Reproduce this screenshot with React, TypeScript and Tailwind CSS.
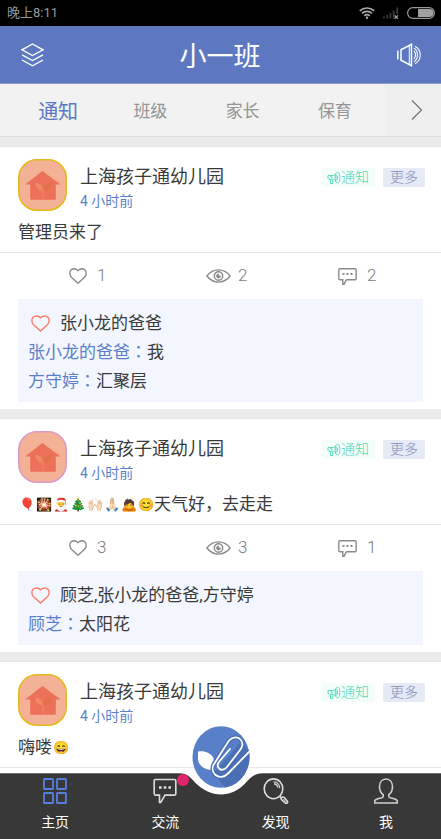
import { useState } from "react";
import type { ReactNode } from "react";

type Comment = { author: string; text: string };

type Activity = {
  likes: number;
  views: number;
  replies: number;
  likedBy: string;
  comments: Comment[];
};

type Post = {
  id: number;
  ring: string;
  emoji?: string[];
  text: string;
  trailing?: string[];
  activity?: Activity;
};

const TABS = ["通知", "班级", "家长", "保育"];

const POSTS: Post[] = [
  {
    id: 1,
    ring: "#e6b91e",
    text: "管理员来了",
    activity: {
      likes: 1,
      views: 2,
      replies: 2,
      likedBy: "张小龙的爸爸",
      comments: [
        { author: "张小龙的爸爸", text: "我" },
        { author: "方守婷", text: "汇聚层" },
      ],
    },
  },
  {
    id: 2,
    ring: "#d99bc9",
    emoji: ["🎈", "🎇", "🎅", "🎄", "🙌🏻", "🙏🏻", "🙇", "😊"],
    text: "天气好，去走走",
    activity: {
      likes: 3,
      views: 3,
      replies: 1,
      likedBy: "顾芝,张小龙的爸爸,方守婷",
      comments: [{ author: "顾芝", text: "太阳花" }],
    },
  },
  {
    id: 3,
    ring: "#e6b91e",
    text: "嗨喽",
    trailing: ["😄"],
  },
];

export default function App() {
  const [tab, setTab] = useState(0);

  return (
    <div className="flex h-screen flex-col overflow-hidden bg-[#ebebeb] font-['Roboto','Noto_Sans_CJK_SC',sans-serif] text-[#3a3a3a]">
      <StatusBar />

      <header className="flex h-[58px] shrink-0 items-center justify-between border-b border-[#8d9bc4] bg-[#5d78c1] pr-[19px] pl-5 text-white">
        <button type="button" aria-label="班级列表">
          <LayersIcon />
        </button>
        <h1 className="pt-1 text-[27px] leading-9">小一班</h1>
        <button type="button" aria-label="广播">
          <SpeakerIcon />
        </button>
      </header>

      <nav className="flex h-[53px] shrink-0 border-b border-[#dedede] bg-[#f2f2f2]">
        <div className="grid flex-1 grid-cols-4 pt-1 pr-1 pl-3">
          {TABS.map((t, i) => (
            <button
              key={t}
              type="button"
              onClick={() => setTab(i)}
              className={i === tab ? "text-[20px] text-[#5b78c5]" : "text-[17px] text-[#959595]"}
            >
              {t}
            </button>
          ))}
        </div>
        <button type="button" aria-label="更多栏目" className="flex w-14 items-center bg-[#efefef] pl-[26px]">
          <svg className="h-5 w-3" viewBox="0 0 12 20" fill="none" stroke="#777" strokeWidth="1.3">
            <path d="M1 .5 10.5 10 1 19.5" />
          </svg>
        </button>
      </nav>

      <main className="flex min-h-0 flex-1 flex-col gap-[9px] overflow-y-auto pt-[9px] [scrollbar-width:none]">
        {POSTS.map((p) => (
          <PostCard key={p.id} post={p} />
        ))}
      </main>

      <BottomNav />
    </div>
  );
}

// ─── Bars ────────────────────────────────────────────────────────────────────

function StatusBar() {
  return (
    <div className="flex h-[26px] shrink-0 items-center justify-between bg-black pr-[6px] pl-[7px] text-[#999]">
      <span className="text-[13px] leading-5">晚上8:11</span>
      <div className="flex items-center gap-2">
        <svg className="h-3 w-4" viewBox="0 0 16 12" fill="none" stroke="#aaa" strokeWidth="1.6">
          <path d="M.8 3.900a10.500 10.500 0 0 1 14.400 0M3 6.400a7.300 7.300 0 0 1 10 0M5.300 8.800a4 4 0 0 1 5.400 0" />
          <circle cx="8" cy="10.800" r="1.200" fill="#aaa" stroke="none" />
        </svg>
        <svg className="h-3 w-4" viewBox="0 0 16 12">
          <path
            d="M1 11.500V9.500M4.200 11.500V8M7.400 11.500V6M10.600 11.500V3.500M14.200 7V.5"
            stroke="#3a3a3a"
            strokeWidth="1.800"
          />
          <path d="M11.600 8.400 15 11.700M15 8.400l-3.400 3.300" stroke="#aaa" strokeWidth="1.200" />
        </svg>
        <svg className="h-3 w-7" viewBox="0 0 28 12">
          <rect x=".6" y=".6" width="26.800" height="10.800" rx="5.400" fill="none" stroke="#999" strokeWidth="1.200" />
          <path d="M11 2h11.500a4 4 0 0 1 0 8H11z" fill="#a0a0a0" />
        </svg>
      </div>
    </div>
  );
}

function BottomNav() {
  return (
    <footer className="relative grid h-[66px] shrink-0 grid-cols-4 border-t border-[#68706b] bg-[#383838] text-white">
      {/* White cradle under the round button */}
      <svg
        className="absolute -top-px left-1/2 h-[22px] w-[90px] -translate-x-1/2"
        viewBox="0 0 90 22"
        fill="#fff"
      >
        <path d="M3 0C12 .5 15 5 19 9.500 27 17.500 36 21.500 45 21.500S63 17.500 70 9.500C74 5 78 .5 87 0z" />
      </svg>
      <NavItem label="主页">
        <svg className="h-[26px] w-6" viewBox="0 0 24 26" fill="none" stroke="#5580e0" strokeWidth="1.800">
          <rect x="1" y="1" width="9" height="10" rx=".6" />
          <rect x="14" y="1" width="9" height="10" rx=".6" />
          <rect x="1" y="15" width="9" height="10" rx=".6" />
          <rect x="14" y="15" width="9" height="10" rx=".6" />
        </svg>
      </NavItem>
      <NavItem label="交流" badge>
        <svg className="h-[26px] w-6" viewBox="0 0 24 26" fill="none" stroke="#dcdcdc" strokeWidth="1.600">
          <path d="M2.500 1.500h19a1.300 1.300 0 0 1 1.300 1.300v13a1.300 1.300 0 0 1-1.300 1.300H12l-4.300 7.400H6.500v-7.400h-4a1.300 1.300 0 0 1-1.300-1.300v-13a1.300 1.300 0 0 1 1.300-1.300z" />
          <path d="M6 9.500h2.600M10.700 9.500h2.600M15.400 9.500H18" strokeWidth="2.600" />
        </svg>
      </NavItem>
      <NavItem label="发现">
        <svg className="h-[26px] w-[26px]" viewBox="0 0 26 26" fill="none" stroke="#dcdcdc" strokeWidth="1.600">
          <ellipse cx="10.500" cy="10.800" rx="9.300" ry="9.900" />
          <path d="M10.500 3.800c4 .3 6 2.600 6.300 6.500M11 5.600c2.200.5 3.600 1.800 4 4" strokeWidth="1.100" />
          <path d="m16.800 18.200 1.600 2" />
          <path d="M18.300 20c.9-1.300 2.300-1.200 3.200-.3l3 3.700c.6 1.300-.8 2.500-2.200 1.800l-3.700-3.400c-.5-.6-.6-1.200-.3-1.800z" />
          <path d="m20.300 21 2.600 2.700" strokeWidth="1" />
        </svg>
      </NavItem>
      <NavItem label="我">
        <svg className="h-[26px] w-6" viewBox="0 0 24 26" fill="none" stroke="#cfcfcf" strokeWidth="1.600">
          <path d="M12 1c4 0 6.500 3.400 6.500 7.800 0 3.500-1.600 6.400-3.700 7.900v1.500c0 .8.500 1.200 1.300 1.500 3 .6 5.200 1.200 6.400 2.200.8.700 1 1.700.8 3.100H.7c-.2-1.400 0-2.400.8-3.100 1.200-1 3.400-1.600 6.400-2.200.8-.3 1.300-.7 1.300-1.500v-1.500c-2.100-1.500-3.700-4.400-3.700-7.900C5.500 4.400 8 1 12 1z" />
        </svg>
      </NavItem>
      <button
        type="button"
        aria-label="发布"
        className="absolute -top-12 left-1/2 h-[62px] w-[58px] -translate-x-1/2"
      >
        <ClipIcon />
      </button>
    </footer>
  );
}

function NavItem({ label, badge, children }: { label: string; badge?: boolean; children: ReactNode }) {
  return (
    <button type="button" className="flex flex-col items-center gap-[6px] pt-1">
      <span className="relative">
        {children}
        {badge && <span className="absolute -top-1 -right-3 h-3 w-3 rounded-full bg-[#e0246e]" />}
      </span>
      <span className="text-[14px] leading-6">{label}</span>
    </button>
  );
}

// ─── Posts ───────────────────────────────────────────────────────────────────

function PostCard({ post }: { post: Post }) {
  return (
    <article className="shrink-0 border-t border-[#e6e6e6] bg-white pb-[7px]">
      <div className="flex pt-3 pr-4 pl-[18px]">
        <Avatar ring={post.ring} />
        <div className="ml-[13px] flex-1">
          <h2 className="pt-1 text-[18px] leading-7">上海孩子通幼儿园</h2>
          <p className="text-[14px] leading-5 text-[#5b7fcb]">4 小时前</p>
        </div>
        <div className="flex gap-2 pt-[9px] text-[14px] leading-[19px] font-light">
          <span className="flex h-[19px] items-center rounded-xs bg-[#f3fdfa] pr-[6px] pl-[5px] text-[#4fd8b8]">
            <HornIcon />
            通知
          </span>
          <button type="button" className="h-[19px] rounded-xs bg-[#e6eaf6] px-[7px] text-[#7f8dba]">
            更多
          </button>
        </div>
      </div>

      <p className="flex h-[42px] items-center border-b border-[#e8e8e8] px-[18px] pt-[2px] text-[17px]">
        {post.emoji?.map((e) => (
          <Emoji key={e} char={e} />
        ))}
        {post.text}
        {post.trailing?.map((e) => (
          <Emoji key={e} char={e} />
        ))}
      </p>

      {post.activity && <PostActivity activity={post.activity} />}
    </article>
  );
}

function PostActivity({ activity }: { activity: Activity }) {
  return (
    <>
      <div className="grid h-[46px] grid-cols-[137fr_132fr_103fr] items-center pl-[69px] text-[17px] font-light text-[#7c7c7c]">
        <button type="button" className="flex items-center gap-[10px]">
          <HeartIcon className="h-4 w-[18px] text-[#8a8a8a]" />
          {activity.likes}
        </button>
        <span className="flex items-center gap-[7px]">
          <EyeIcon />
          {activity.views}
        </span>
        <button type="button" className="flex items-center gap-[10px]">
          <BubbleIcon />
          {activity.replies}
        </button>
      </div>

      <div className="mx-[18px] bg-[#f3f6fe] px-[10px] pt-[10px] pb-[6px] text-[17px] leading-[29px]">
        <p className="flex items-center gap-[10px] pl-[3px]">
          <HeartIcon className="h-[17px] w-[19px] text-[#fa7f6c]" />
          {activity.likedBy}
        </p>
        {activity.comments.map((c) => (
          <p key={c.author}>
            <span className="text-[#5b7fcb]">
              {c.author}
              <span className="font-['Noto_Sans_CJK_TC',sans-serif] leading-none">：</span>
            </span>
            {c.text}
          </p>
        ))}
      </div>
    </>
  );
}

function Emoji({ char }: { char: string }) {
  return <span className="w-[17px] shrink-0 text-center text-[13px]">{char}</span>;
}

function Avatar({ ring }: { ring: string }) {
  return (
    <svg className="h-[52px] w-[49px] shrink-0" viewBox="0 0 49 52" role="img" aria-label="头像">
      <rect x=".8" y=".8" width="47.400" height="50.400" rx="18" fill="#f3b196" stroke={ring} strokeWidth="1.600" />
      <path d="M24.500 12 42.500 25.500h-4.700v14c0 .8-.6 1.300-1.300 1.300h-23c-.8 0-1.300-.5-1.300-1.300v-14H7z" fill="#ed705a" />
      <path d="M25 31.500c0-5.500 3.300-7.500 9-8.300-.2 5.500-3.300 8.300-9 8.300z" fill="#e0714a" />
      <path d="M24.800 31.500c-.4-5.300-3-7.300-7.800-8.200.4 5 2.800 8 7.800 8.200z" fill="#f08a63" />
      <path d="M25 30.500v9" stroke="#f08a63" strokeWidth="1.200" />
    </svg>
  );
}

// ─── Icons ───────────────────────────────────────────────────────────────────

function LayersIcon() {
  return (
    <svg className="h-6 w-6" viewBox="0 0 24 24" fill="none" stroke="#fff" strokeWidth="1.400">
      <path d="M12.500 1 23 6.800 12.500 12.500 2 6.800z" />
      <path d="M2 11.800 12.500 17.500 23 11.800M2 17 12.500 22.800 23 17" />
    </svg>
  );
}

function SpeakerIcon() {
  return (
    <svg className="h-6 w-[26px]" viewBox="0 0 26 24" fill="none" stroke="#fff" strokeWidth="1.500">
      <path d="M1.800 7.500v9M5 6.800v10.400l10.500 5.500V1.300z" />
      <path d="M13.300 2.500v19" strokeWidth="1" />
      <path d="M18 8c2 2 2 6 0 8M18 5.300c4.600 2.700 4.600 10.700 0 13.400M19 3.300c7 4 7 13.400 0 17.400" strokeWidth="1.100" />
    </svg>
  );
}

function HornIcon() {
  return (
    <svg className="h-[14px] w-[14px]" viewBox="0 0 14 14" fill="none" stroke="#5fdcc0" strokeWidth="1">
      <path d="M1 4.500h5.500L9 3v7.200L6.500 8.300H2.200C1 8.300.8 6.500 1 4.500zM3.500 8.300v4.200h2.300V8.300M4 4.500v1.800h2" />
      <ellipse cx="10.500" cy="6.600" rx="2.300" ry="5.200" />
      <path d="M10.500 4.500v4.200" />
    </svg>
  );
}

function HeartIcon({ className }: { className: string }) {
  return (
    <svg className={className} viewBox="0 0 18 16" fill="none" stroke="currentColor" strokeWidth="1.400">
      <path d="M9 2.600C7.800 1.300 6.500.8 5 .8 2.500.8.800 2.700.8 5.200c0 1.700.7 3 1.900 4.200L9 15.200l6.300-5.800c1.200-1.200 1.900-2.500 1.900-4.200C17.200 2.700 15.500.8 13 .8c-1.500 0-2.800.5-4 1.800z" />
    </svg>
  );
}

function EyeIcon() {
  return (
    <svg className="h-[14px] w-[25px]" viewBox="0 0 25 14" fill="none" stroke="#8a8a8a" strokeWidth="1.400">
      <path d="M.9 7C4 3 8 .9 12.500.9S21 3 24.100 7C21 11 17 13.100 12.500 13.100S4 11 .9 7z" />
      <circle cx="12.500" cy="7" r="4.200" />
      <path d="M12.500 5A2 2 0 1 0 14.500 7h-2z" fill="#8a8a8a" strokeWidth=".8" />
    </svg>
  );
}

function BubbleIcon() {
  return (
    <svg className="h-[17px] w-[19px]" viewBox="0 0 19 17" fill="none" stroke="#8a8a8a" strokeWidth="1.400">
      <path d="M2 .8h15c.7 0 1.200.5 1.200 1.200v8.500c0 .7-.5 1.200-1.200 1.200H8.500L6 16.200H4.800v-4.500H2c-.7 0-1.200-.5-1.200-1.200V2C.8 1.300 1.300.8 2 .8z" />
      <path d="M4.500 6h2M8.500 6h2M12.500 6h2" strokeWidth="2" />
    </svg>
  );
}

function ClipIcon() {
  return (
    <svg className="h-full w-full" viewBox="0 0 58 62">
      <clipPath id="disc">
        <ellipse cx="29" cy="31" rx="28.500" ry="30.800" />
      </clipPath>
      <g clipPath="url(#disc)">
        <path fill="#5880c9" d="M0 0h58v62H0z" />
        <path fill="#4a6fb3" d="M49 16 58 26v36H33L22 47z" />
        <path d="M6 25.500c7-1 12.500 1.500 15.500 6.500l1 12C13 44.500 6.500 40 6 33z" fill="#fff" />
        <path
          d="M58 25 36 47.500c-4 4-9 4.500-12.700 1.300-3.800-3.800-3.300-9 .2-13L37 14.500c4-4.200 8.800-3.800 11.500-1s2.500 7.500-.8 11L34.500 42"
          fill="none"
          stroke="#4a6fb3"
          strokeWidth="4.500"
        />
        <path
          d="M58 25 36 47.500c-4 4-9 4.500-12.700 1.300-3.800-3.800-3.300-9 .2-13L37 14.500c4-4.200 8.800-3.800 11.500-1s2.500 7.500-.8 11L34.500 41.500c-2.300 2.600-5.400 3-7.400 1s-1.700-4.900.5-7.500L38 23"
          fill="none"
          stroke="#fff"
          strokeWidth="1.800"
          strokeLinecap="round"
        />
      </g>
    </svg>
  );
}
